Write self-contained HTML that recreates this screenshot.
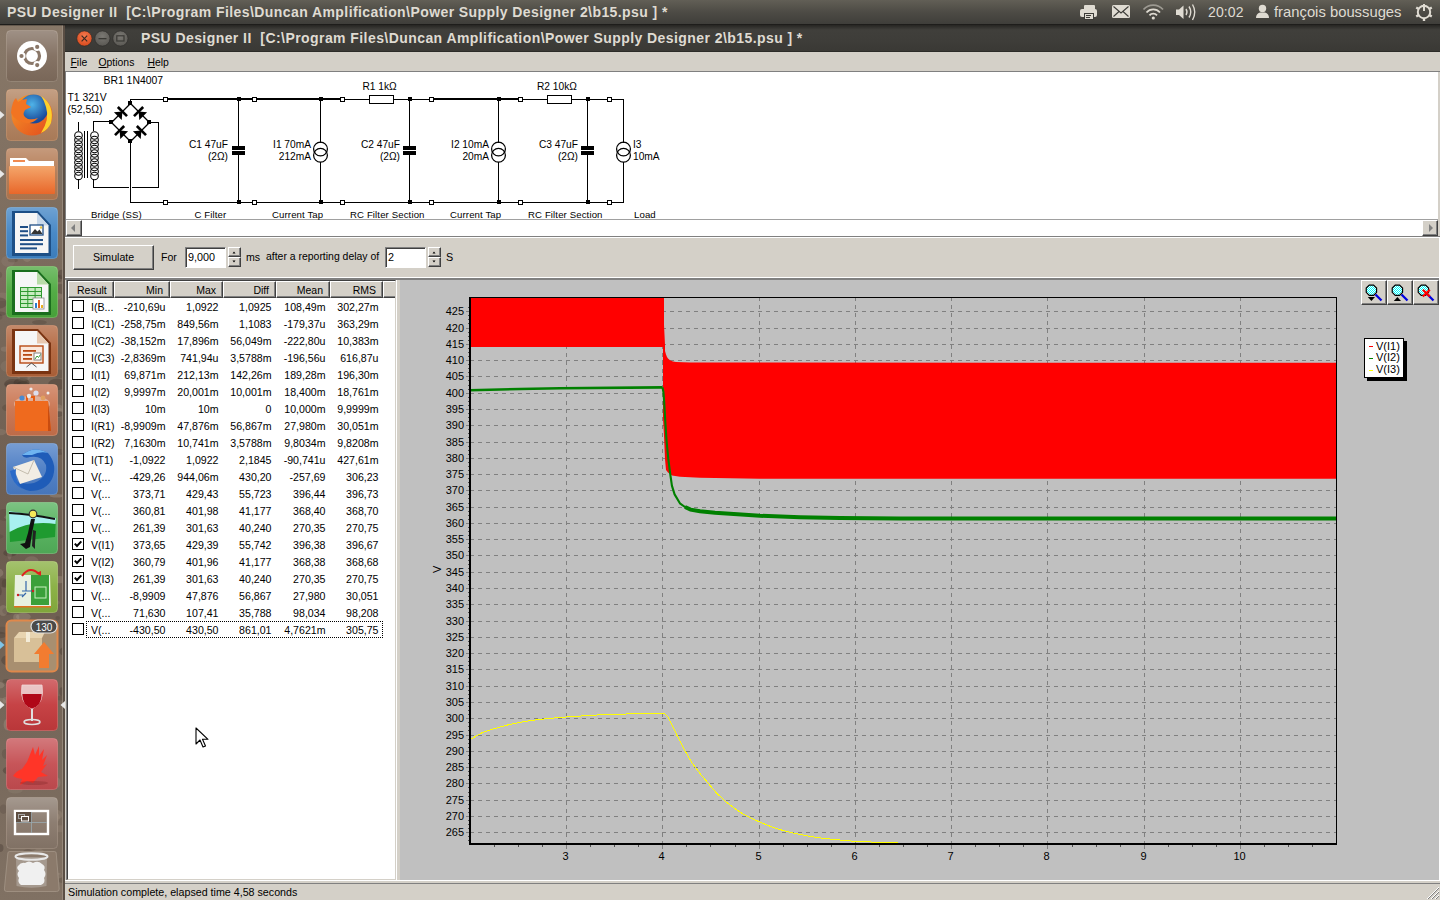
<!DOCTYPE html>
<html><head><meta charset="utf-8"><title>PSU Designer II</title>
<style>
*{margin:0;padding:0;box-sizing:border-box}
html,body{width:1440px;height:900px;overflow:hidden;background:#3c3b37;font-family:"Liberation Sans",sans-serif}
.a{position:absolute}
.t{position:absolute;white-space:nowrap;line-height:1}
svg{position:absolute;overflow:visible}
</style></head><body>

<div class="a" style="left:0;top:0;width:1440px;height:24px;background:linear-gradient(#625f56,#4d4b45 50%,#3f3e3a)"></div><div class="a" style="left:0;top:24px;width:1440px;height:1px;background:#1e1d1b"></div>
<div class="t" style="left:7px;top:5px;font-size:14px;font-weight:bold;color:#dfdbd2;letter-spacing:0.42px">PSU Designer II&nbsp; [C:\Program Files\Duncan Amplification\Power Supply Designer 2\b15.psu ] *</div>
<svg style="left:0;top:0" width="1440" height="24" viewBox="0 0 1440 24">
<g fill="#dfdbd2" stroke="none">
<!-- printer -->
<rect x="1084" y="5" width="11" height="5" rx="1"/>
<rect x="1080" y="9" width="17" height="8" rx="2"/>
<rect x="1084" y="13" width="10" height="7" fill="#3c3b37"/>
<rect x="1085" y="14" width="8" height="5"/>
<rect x="1086" y="15" width="5" height="1" fill="#3c3b37"/><rect x="1086" y="17" width="4" height="1" fill="#3c3b37"/>
<!-- mail -->
<rect x="1112" y="5" width="18" height="13" rx="1.5"/>
<path d="M1113.5 6.5 L1121 13 L1128.5 6.5 M1113.5 16.5 L1119 11.5 M1128.5 16.5 L1123 11.5" stroke="#3c3b37" stroke-width="1.1" fill="none"/>
<!-- wifi -->
<path d="M1143.5 9.5 A13 13 0 0 1 1163 9.5" stroke="#9d9a92" stroke-width="1.8" fill="none"/>
<path d="M1146.5 12.5 A9 9 0 0 1 1160 12.5" stroke="#dfdbd2" stroke-width="1.8" fill="none"/>
<path d="M1149.5 15.3 A5 5 0 0 1 1157 15.3" stroke="#dfdbd2" stroke-width="1.8" fill="none"/>
<circle cx="1153.3" cy="18" r="1.6"/>
<!-- volume -->
<path d="M1176 9.5 h3 l4.5 -4 v13.5 l-4.5 -4 h-3 z"/>
<path d="M1186 9 Q1188 12 1186 15" stroke="#dfdbd2" stroke-width="1.4" fill="none"/>
<path d="M1189 6.5 Q1192.5 12 1189 17.5" stroke="#dfdbd2" stroke-width="1.4" fill="none"/>
<path d="M1192.5 4.5 Q1197 12 1192.5 20" stroke="#dfdbd2" stroke-width="1.4" fill="none"/>
<!-- user -->
<circle cx="1262.5" cy="8.5" r="3.7"/>
<path d="M1256 18 Q1256 13.5 1260 12.5 L1265 12.5 Q1269 13.5 1269 18 Z"/>
<!-- gear/power -->
<g transform="translate(1424,12)">
<circle r="6.2" fill="none" stroke="#dfdbd2" stroke-width="2"/>
<rect x="-1" y="-8" width="2" height="7"/>
<rect x="-1.2" y="-9" width="2.4" height="3" transform="rotate(60)"/><rect x="-1.2" y="-9" width="2.4" height="3" transform="rotate(120)"/>
<rect x="-1.2" y="-9" width="2.4" height="3" transform="rotate(180)"/><rect x="-1.2" y="-9" width="2.4" height="3" transform="rotate(240)"/><rect x="-1.2" y="-9" width="2.4" height="3" transform="rotate(300)"/>
</g>
</g></svg>
<div class="t" style="left:1208px;top:5px;font-size:14px;color:#dfdbd2;letter-spacing:0.1px">20:02</div>
<div class="t" style="left:1274px;top:5px;font-size:14.8px;color:#dfdbd2">françois boussuges</div>
<svg style="left:0;top:24px" width="65" height="876" viewBox="0 24 65 876"><defs>
<linearGradient id="gl" x1="0" y1="0" x2="0" y2="1"><stop offset="0" stop-color="#fff" stop-opacity="0.25"/><stop offset="0.5" stop-color="#fff" stop-opacity="0.05"/><stop offset="1" stop-color="#000" stop-opacity="0.05"/></linearGradient>
<radialGradient id="ffg" cx="0.45" cy="0.35" r="0.6"><stop offset="0" stop-color="#4fb3e8"/><stop offset="1" stop-color="#1a4a9a"/></radialGradient>
<linearGradient id="fox" x1="0" y1="0" x2="1" y2="1"><stop offset="0" stop-color="#f79b2a"/><stop offset="1" stop-color="#e24a1c"/></linearGradient>
<linearGradient id="fold" x1="0" y1="0" x2="0" y2="1"><stop offset="0" stop-color="#f4a66b"/><stop offset="1" stop-color="#e8672a"/></linearGradient>
</defs><defs><linearGradient id="lbg" x1="0" y1="0" x2="0" y2="1"><stop offset="0" stop-color="#887868"/><stop offset="0.3" stop-color="#7a6a5c"/><stop offset="0.6" stop-color="#6c5c4f"/><stop offset="0.8" stop-color="#76675a"/><stop offset="1" stop-color="#807163"/></linearGradient></defs><rect x="0" y="24" width="65" height="876" fill="url(#lbg)"/><ellipse cx="33.2" cy="535.0" rx="8.5" ry="3.6" fill="#3e3229" opacity="0.30"/><ellipse cx="29.8" cy="366.3" rx="6.4" ry="5.1" fill="#3e3229" opacity="0.23"/><ellipse cx="50.7" cy="307.1" rx="6.9" ry="1.7" fill="#a89888" opacity="0.39"/><ellipse cx="37.1" cy="662.0" rx="3.1" ry="1.6" fill="#3e3229" opacity="0.16"/><ellipse cx="10.9" cy="369.8" rx="2.2" ry="3.6" fill="#3e3229" opacity="0.36"/><ellipse cx="38.8" cy="577.0" rx="5.5" ry="4.5" fill="#3e3229" opacity="0.22"/><ellipse cx="63.7" cy="878.5" rx="7.9" ry="4.7" fill="#3e3229" opacity="0.21"/><ellipse cx="-1.1" cy="432.1" rx="7.4" ry="3.3" fill="#a89888" opacity="0.25"/><ellipse cx="53.3" cy="853.6" rx="2.0" ry="2.4" fill="#a89888" opacity="0.27"/><ellipse cx="21.8" cy="867.6" rx="2.5" ry="4.3" fill="#a89888" opacity="0.22"/><ellipse cx="17.3" cy="304.9" rx="8.7" ry="4.9" fill="#3e3229" opacity="0.21"/><ellipse cx="-1.8" cy="313.7" rx="7.6" ry="2.3" fill="#3e3229" opacity="0.26"/><ellipse cx="45.2" cy="370.1" rx="2.9" ry="4.4" fill="#3e3229" opacity="0.26"/><ellipse cx="12.9" cy="384.1" rx="8.8" ry="5.1" fill="#3e3229" opacity="0.37"/><ellipse cx="21.6" cy="382.7" rx="8.0" ry="4.4" fill="#3e3229" opacity="0.40"/><ellipse cx="12.1" cy="384.3" rx="7.4" ry="3.0" fill="#3e3229" opacity="0.17"/><ellipse cx="34.8" cy="306.8" rx="3.7" ry="4.2" fill="#3e3229" opacity="0.26"/><ellipse cx="27.9" cy="854.3" rx="6.0" ry="5.4" fill="#3e3229" opacity="0.19"/><ellipse cx="51.2" cy="822.3" rx="3.7" ry="2.4" fill="#a89888" opacity="0.39"/><ellipse cx="60.5" cy="373.9" rx="8.2" ry="4.2" fill="#3e3229" opacity="0.18"/><ellipse cx="61.4" cy="274.4" rx="3.7" ry="4.7" fill="#3e3229" opacity="0.36"/><ellipse cx="14.5" cy="625.8" rx="3.2" ry="4.7" fill="#3e3229" opacity="0.21"/><ellipse cx="53.7" cy="602.4" rx="6.3" ry="2.8" fill="#a89888" opacity="0.20"/><ellipse cx="12.8" cy="260.4" rx="5.1" ry="1.8" fill="#3e3229" opacity="0.24"/><ellipse cx="3.2" cy="610.5" rx="4.5" ry="5.5" fill="#a89888" opacity="0.31"/><ellipse cx="34.9" cy="685.5" rx="3.0" ry="1.7" fill="#3e3229" opacity="0.38"/><ellipse cx="61.4" cy="691.6" rx="2.1" ry="4.4" fill="#3e3229" opacity="0.33"/><ellipse cx="64.0" cy="450.9" rx="2.5" ry="4.0" fill="#a89888" opacity="0.38"/><ellipse cx="43.3" cy="714.4" rx="7.6" ry="5.6" fill="#3e3229" opacity="0.32"/><ellipse cx="55.0" cy="817.5" rx="4.9" ry="5.1" fill="#a89888" opacity="0.29"/><ellipse cx="20.8" cy="643.7" rx="6.1" ry="4.2" fill="#3e3229" opacity="0.31"/><ellipse cx="55.6" cy="875.8" rx="7.1" ry="3.2" fill="#a89888" opacity="0.30"/><ellipse cx="52.7" cy="527.5" rx="2.6" ry="4.9" fill="#3e3229" opacity="0.30"/><ellipse cx="10.1" cy="553.0" rx="6.9" ry="3.7" fill="#3e3229" opacity="0.38"/><ellipse cx="-5.2" cy="411.2" rx="4.1" ry="4.6" fill="#3e3229" opacity="0.19"/><ellipse cx="40.2" cy="820.6" rx="5.1" ry="5.5" fill="#3e3229" opacity="0.32"/><ellipse cx="24.2" cy="375.1" rx="7.6" ry="5.6" fill="#a89888" opacity="0.25"/><ellipse cx="16.2" cy="617.4" rx="3.0" ry="3.7" fill="#a89888" opacity="0.36"/><ellipse cx="60.5" cy="698.1" rx="3.9" ry="2.3" fill="#3e3229" opacity="0.22"/><ellipse cx="23.0" cy="384.9" rx="6.4" ry="3.7" fill="#3e3229" opacity="0.36"/><ellipse cx="25.7" cy="868.7" rx="2.5" ry="1.6" fill="#a89888" opacity="0.16"/><ellipse cx="33.9" cy="696.4" rx="4.2" ry="5.1" fill="#3e3229" opacity="0.18"/><ellipse cx="-4.3" cy="536.5" rx="7.8" ry="2.6" fill="#3e3229" opacity="0.16"/><ellipse cx="25.3" cy="646.4" rx="6.4" ry="4.4" fill="#a89888" opacity="0.39"/><ellipse cx="8.0" cy="681.2" rx="5.3" ry="2.3" fill="#3e3229" opacity="0.27"/><ellipse cx="6.5" cy="699.9" rx="3.9" ry="3.1" fill="#a89888" opacity="0.28"/><ellipse cx="46.9" cy="637.1" rx="4.8" ry="5.1" fill="#a89888" opacity="0.17"/><ellipse cx="44.6" cy="837.5" rx="2.9" ry="3.5" fill="#3e3229" opacity="0.38"/><ellipse cx="33.8" cy="487.4" rx="8.2" ry="5.1" fill="#a89888" opacity="0.27"/><ellipse cx="8.3" cy="660.3" rx="7.1" ry="5.2" fill="#3e3229" opacity="0.33"/><ellipse cx="57.0" cy="384.4" rx="8.9" ry="5.9" fill="#3e3229" opacity="0.35"/><ellipse cx="57.7" cy="451.8" rx="8.0" ry="3.1" fill="#3e3229" opacity="0.26"/><ellipse cx="47.8" cy="596.7" rx="5.4" ry="1.6" fill="#a89888" opacity="0.17"/><ellipse cx="6.1" cy="753.9" rx="4.3" ry="5.0" fill="#3e3229" opacity="0.19"/><ellipse cx="44.6" cy="575.4" rx="7.9" ry="4.6" fill="#a89888" opacity="0.27"/><ellipse cx="0.0" cy="848.0" rx="3.5" ry="3.9" fill="#3e3229" opacity="0.33"/><ellipse cx="30.6" cy="652.5" rx="7.9" ry="4.0" fill="#3e3229" opacity="0.25"/><ellipse cx="57.0" cy="782.5" rx="3.5" ry="5.3" fill="#a89888" opacity="0.28"/><ellipse cx="8.1" cy="611.0" rx="5.8" ry="3.8" fill="#3e3229" opacity="0.16"/><ellipse cx="30.1" cy="860.7" rx="4.8" ry="5.1" fill="#3e3229" opacity="0.27"/><ellipse cx="-1.4" cy="685.3" rx="5.8" ry="3.4" fill="#a89888" opacity="0.38"/><ellipse cx="27.1" cy="419.6" rx="2.9" ry="3.5" fill="#a89888" opacity="0.38"/><ellipse cx="16.2" cy="550.2" rx="3.3" ry="4.3" fill="#a89888" opacity="0.18"/><ellipse cx="-4.4" cy="741.0" rx="3.4" ry="2.5" fill="#a89888" opacity="0.23"/><ellipse cx="37.4" cy="473.9" rx="2.7" ry="4.8" fill="#3e3229" opacity="0.28"/><ellipse cx="7.8" cy="407.8" rx="5.7" ry="3.5" fill="#3e3229" opacity="0.25"/><ellipse cx="5.2" cy="583.5" rx="3.4" ry="4.3" fill="#3e3229" opacity="0.28"/><ellipse cx="36.8" cy="786.3" rx="8.0" ry="2.5" fill="#a89888" opacity="0.35"/><ellipse cx="16.1" cy="818.7" rx="4.2" ry="5.7" fill="#3e3229" opacity="0.40"/><ellipse cx="3.4" cy="809.2" rx="3.7" ry="4.8" fill="#3e3229" opacity="0.17"/><ellipse cx="23.5" cy="774.3" rx="7.5" ry="2.1" fill="#3e3229" opacity="0.32"/><ellipse cx="8.1" cy="261.2" rx="6.8" ry="5.6" fill="#a89888" opacity="0.18"/><ellipse cx="47.1" cy="568.6" rx="5.5" ry="4.6" fill="#3e3229" opacity="0.17"/><ellipse cx="-3.4" cy="316.9" rx="5.9" ry="3.8" fill="#3e3229" opacity="0.19"/><ellipse cx="8.3" cy="366.3" rx="7.9" ry="6.0" fill="#a89888" opacity="0.17"/><ellipse cx="60.6" cy="289.0" rx="5.2" ry="4.9" fill="#3e3229" opacity="0.27"/><ellipse cx="24.1" cy="574.6" rx="6.2" ry="1.6" fill="#a89888" opacity="0.36"/><ellipse cx="25.8" cy="364.2" rx="7.2" ry="3.3" fill="#3e3229" opacity="0.19"/><ellipse cx="-4.9" cy="572.9" rx="8.3" ry="5.1" fill="#a89888" opacity="0.37"/><ellipse cx="22.3" cy="646.5" rx="6.2" ry="3.8" fill="#a89888" opacity="0.35"/><ellipse cx="57.8" cy="412.7" rx="7.2" ry="5.0" fill="#a89888" opacity="0.25"/><ellipse cx="55.6" cy="814.8" rx="6.9" ry="5.0" fill="#a89888" opacity="0.25"/><ellipse cx="-1.1" cy="705.3" rx="4.4" ry="3.6" fill="#3e3229" opacity="0.24"/><ellipse cx="37.7" cy="652.4" rx="3.6" ry="5.8" fill="#a89888" opacity="0.23"/><ellipse cx="33.9" cy="665.6" rx="5.7" ry="3.3" fill="#a89888" opacity="0.31"/><ellipse cx="47.3" cy="691.8" rx="8.9" ry="1.6" fill="#3e3229" opacity="0.33"/><ellipse cx="22.1" cy="411.7" rx="2.4" ry="2.4" fill="#3e3229" opacity="0.17"/><ellipse cx="57.4" cy="408.1" rx="5.9" ry="3.8" fill="#a89888" opacity="0.29"/><ellipse cx="38.7" cy="876.9" rx="7.7" ry="1.8" fill="#3e3229" opacity="0.34"/><ellipse cx="59.1" cy="278.4" rx="3.1" ry="3.6" fill="#3e3229" opacity="0.27"/><ellipse cx="-1.9" cy="635.0" rx="8.6" ry="3.4" fill="#3e3229" opacity="0.30"/><ellipse cx="14.0" cy="480.3" rx="6.6" ry="4.0" fill="#3e3229" opacity="0.33"/><ellipse cx="-5.0" cy="436.5" rx="3.7" ry="1.7" fill="#3e3229" opacity="0.34"/><ellipse cx="56.8" cy="495.7" rx="7.2" ry="1.7" fill="#a89888" opacity="0.39"/><ellipse cx="57.4" cy="296.3" rx="5.0" ry="3.6" fill="#a89888" opacity="0.21"/><ellipse cx="59.6" cy="579.7" rx="7.1" ry="3.6" fill="#a89888" opacity="0.35"/><ellipse cx="2.1" cy="630.3" rx="6.4" ry="3.6" fill="#3e3229" opacity="0.16"/><ellipse cx="2.7" cy="582.7" rx="5.1" ry="4.5" fill="#3e3229" opacity="0.22"/><ellipse cx="23.4" cy="616.8" rx="7.4" ry="3.9" fill="#a89888" opacity="0.39"/><ellipse cx="10.7" cy="712.6" rx="2.8" ry="5.5" fill="#a89888" opacity="0.31"/><ellipse cx="13.0" cy="476.3" rx="6.8" ry="4.0" fill="#3e3229" opacity="0.31"/><ellipse cx="7.3" cy="724.6" rx="3.7" ry="5.9" fill="#a89888" opacity="0.37"/><ellipse cx="-1.7" cy="274.9" rx="3.9" ry="3.4" fill="#3e3229" opacity="0.18"/><ellipse cx="-0.9" cy="591.2" rx="2.6" ry="4.5" fill="#3e3229" opacity="0.31"/><ellipse cx="27.5" cy="485.1" rx="3.5" ry="3.0" fill="#a89888" opacity="0.36"/><ellipse cx="2.4" cy="296.8" rx="7.7" ry="4.3" fill="#a89888" opacity="0.20"/><ellipse cx="12.1" cy="517.3" rx="7.7" ry="3.2" fill="#a89888" opacity="0.40"/><ellipse cx="32.4" cy="455.0" rx="7.2" ry="5.6" fill="#3e3229" opacity="0.24"/><ellipse cx="55.3" cy="311.1" rx="2.5" ry="1.9" fill="#3e3229" opacity="0.27"/><ellipse cx="14.9" cy="681.8" rx="7.4" ry="1.8" fill="#3e3229" opacity="0.32"/><ellipse cx="15.3" cy="301.5" rx="7.1" ry="4.6" fill="#3e3229" opacity="0.19"/><ellipse cx="44.8" cy="475.4" rx="4.6" ry="2.0" fill="#a89888" opacity="0.29"/><ellipse cx="59.8" cy="828.7" rx="8.4" ry="3.5" fill="#a89888" opacity="0.23"/><ellipse cx="22.0" cy="450.1" rx="8.5" ry="5.5" fill="#3e3229" opacity="0.24"/><ellipse cx="19.4" cy="480.3" rx="4.8" ry="3.2" fill="#3e3229" opacity="0.29"/><ellipse cx="31.8" cy="752.2" rx="7.9" ry="4.0" fill="#3e3229" opacity="0.34"/><ellipse cx="13.7" cy="805.0" rx="2.2" ry="3.8" fill="#3e3229" opacity="0.29"/><ellipse cx="39.6" cy="858.8" rx="7.6" ry="1.8" fill="#3e3229" opacity="0.35"/><ellipse cx="-0.3" cy="302.9" rx="7.2" ry="5.5" fill="#3e3229" opacity="0.31"/><ellipse cx="46.2" cy="340.6" rx="6.5" ry="2.6" fill="#3e3229" opacity="0.34"/><ellipse cx="47.5" cy="578.6" rx="4.8" ry="3.0" fill="#a89888" opacity="0.32"/><ellipse cx="31.6" cy="561.0" rx="7.0" ry="4.7" fill="#a89888" opacity="0.25"/><ellipse cx="40.7" cy="770.5" rx="8.0" ry="5.1" fill="#a89888" opacity="0.37"/><ellipse cx="38.8" cy="853.4" rx="5.7" ry="4.7" fill="#a89888" opacity="0.26"/><ellipse cx="4.2" cy="514.9" rx="7.2" ry="6.0" fill="#3e3229" opacity="0.19"/><ellipse cx="23.7" cy="378.7" rx="4.0" ry="5.9" fill="#3e3229" opacity="0.23"/><ellipse cx="39.4" cy="322.3" rx="7.4" ry="2.3" fill="#3e3229" opacity="0.26"/><ellipse cx="57.7" cy="618.0" rx="2.3" ry="2.0" fill="#3e3229" opacity="0.20"/><ellipse cx="44.2" cy="398.3" rx="6.2" ry="2.5" fill="#3e3229" opacity="0.22"/><ellipse cx="47.0" cy="358.7" rx="4.2" ry="4.0" fill="#a89888" opacity="0.27"/><ellipse cx="56.1" cy="414.1" rx="8.4" ry="3.0" fill="#3e3229" opacity="0.39"/><ellipse cx="9.5" cy="554.0" rx="2.3" ry="5.8" fill="#a89888" opacity="0.25"/><ellipse cx="30.1" cy="582.4" rx="3.9" ry="6.0" fill="#a89888" opacity="0.21"/><ellipse cx="27.1" cy="256.9" rx="4.6" ry="5.1" fill="#a89888" opacity="0.30"/><ellipse cx="5.0" cy="349.1" rx="4.3" ry="2.7" fill="#a89888" opacity="0.28"/><ellipse cx="63.5" cy="651.3" rx="3.9" ry="3.9" fill="#3e3229" opacity="0.34"/><ellipse cx="51.5" cy="250.9" rx="7.9" ry="5.2" fill="#3e3229" opacity="0.22"/><ellipse cx="0.8" cy="701.4" rx="5.4" ry="3.6" fill="#a89888" opacity="0.30"/><ellipse cx="15.3" cy="790.1" rx="7.5" ry="3.4" fill="#a89888" opacity="0.17"/><ellipse cx="8.6" cy="770.6" rx="5.8" ry="3.9" fill="#3e3229" opacity="0.36"/><rect x="62" y="24" width="1" height="876" fill="#9b8d7f" opacity="0.8"/><rect x="63" y="24" width="2" height="876" fill="#5a4e44"/><rect x="6.5" y="30.5" width="51" height="51" rx="4" fill="#7f6c5d" stroke="#a89888" stroke-opacity="0.6"/><rect x="6.5" y="30.5" width="51" height="51" rx="4" fill="url(#gl)"/><circle cx="32" cy="56" r="15" fill="#fff"/><circle cx="32" cy="56" r="7.5" fill="none" stroke="#8a7768" stroke-width="3.2"/><circle cx="36.9" cy="47.5" r="3.4" fill="#fff"/><circle cx="37.2" cy="46.9" r="2.1" fill="#8a7768"/><circle cx="22.2" cy="56.0" r="3.4" fill="#fff"/><circle cx="21.5" cy="56.0" r="2.1" fill="#8a7768"/><circle cx="36.9" cy="64.5" r="3.4" fill="#fff"/><circle cx="37.2" cy="65.1" r="2.1" fill="#8a7768"/><rect x="6.5" y="89.5" width="51" height="51" rx="4" fill="#b0805c" stroke="#d09a70" stroke-opacity="0.6"/><rect x="6.5" y="89.5" width="51" height="51" rx="4" fill="url(#gl)"/><circle cx="32" cy="115" r="20.5" fill="url(#fox)"/><circle cx="33.5" cy="109" r="14.5" fill="url(#ffg)"/><path d="M41 96 Q55 105 51 123 Q48 130 41 133 Q50 119 46 107 Q44 100 41 96 Z" fill="#fcd02c"/><path d="M11 113 Q12 101 16 98 L18 102 Q22 99 27 99 L26 104 L31 107 L25 110 Q21 116 28 119 Q33 120 38 118 Q33 124 26 123 Q15 121 11 113 Z" fill="#f27422"/><rect x="6.5" y="148.5" width="51" height="51" rx="4" fill="#b27850" stroke="#cc9470" stroke-opacity="0.6"/><rect x="6.5" y="148.5" width="51" height="51" rx="4" fill="url(#gl)"/><path d="M10 158 h16 l3 3 h25 v7 h-44 z" fill="#fff"/><rect x="13" y="160" width="12" height="2" fill="#f08a50"/><rect x="9" y="166" width="46" height="28" rx="1" fill="url(#fold)"/><rect x="6.5" y="207.5" width="51" height="51" rx="4" fill="#3f83c4" stroke="#74aee0" stroke-opacity="0.6"/><rect x="6.5" y="207.5" width="51" height="51" rx="4" fill="url(#gl)"/><path d="M12 211 h26 l13 14 v31 h-39 z" fill="#1d4f86"/><path d="M15 213 h22 l11.5 12.5 v27.5 h-33.5 z" fill="#f6f6f6"/><path d="M37 213 l11.5 12.5 h-11.5 z" fill="#c8d8ea"/><rect x="20" y="226.0" width="8" height="2" fill="#1f4e86"/><rect x="20" y="230.2" width="8" height="2" fill="#1f4e86"/><rect x="20" y="234.4" width="8" height="2" fill="#1f4e86"/><rect x="30" y="225" width="13" height="10" fill="#fff" stroke="#1f4e86" stroke-width="1.3"/><path d="M31 234 l4 -5 l2.5 2.5 l2 -2 l3 4.5 z" fill="#333"/><circle cx="41" cy="227.5" r="1.2" fill="#e8c040"/><rect x="20" y="239.0" width="23" height="2" fill="#1f4e86"/><rect x="20" y="243.2" width="23" height="2" fill="#1f4e86"/><rect x="20" y="247.4" width="17" height="2" fill="#1f4e86"/><rect x="6.5" y="266.5" width="51" height="51" rx="4" fill="#4aa83c" stroke="#80cc6c" stroke-opacity="0.6"/><rect x="6.5" y="266.5" width="51" height="51" rx="4" fill="url(#gl)"/><path d="M12 270 h26 l13 14 v31 h-39 z" fill="#1b6e1e"/><path d="M15 272 h22 l11.5 12.5 v27.5 h-33.5 z" fill="#f6f6f6"/><path d="M37 272 l11.5 12.5 h-11.5 z" fill="#b8dca8"/><rect x="20" y="287" width="22" height="21" fill="#2f9a30"/><rect x="21" y="288.0" width="20" height="3" fill="#c8ecc0"/><rect x="21" y="292.0" width="20" height="3" fill="#c8ecc0"/><rect x="21" y="296.0" width="20" height="3" fill="#c8ecc0"/><rect x="21" y="300.0" width="20" height="3" fill="#c8ecc0"/><rect x="21" y="304.0" width="20" height="3" fill="#c8ecc0"/><rect x="27.3" y="287" width="1" height="21" fill="#2f9a30"/><rect x="34.6" y="287" width="1" height="21" fill="#2f9a30"/><rect x="33" y="298" width="11" height="11" fill="#fff" stroke="#888" stroke-width="0.8"/><rect x="35" y="303" width="2" height="5" fill="#2a7ad0"/><rect x="38" y="300" width="2" height="8" fill="#e06020"/><rect x="41" y="305" width="2" height="3" fill="#e8b020"/><rect x="6.5" y="325.5" width="51" height="51" rx="4" fill="#b1633a" stroke="#d08c66" stroke-opacity="0.6"/><rect x="6.5" y="325.5" width="51" height="51" rx="4" fill="url(#gl)"/><path d="M12 329 h26 l13 14 v31 h-39 z" fill="#7a3412"/><path d="M15 331 h22 l11.5 12.5 v27.5 h-33.5 z" fill="#f6f6f6"/><path d="M37 331 l11.5 12.5 h-11.5 z" fill="#e8c8b0"/><rect x="20" y="346" width="23" height="17" fill="#fbe8dc" stroke="#b84a14" stroke-width="1.4"/><rect x="23" y="350" width="13" height="1.8" fill="#b84a14"/><rect x="23" y="354" width="9" height="1.8" fill="#b84a14"/><rect x="23" y="358" width="9" height="1.8" fill="#b84a14"/><rect x="34" y="353" width="7" height="7" fill="#fff" stroke="#666" stroke-width="0.8"/><path d="M35 359 l2 -3 l1.5 1.5 l2 -3" stroke="#3a9a3a" fill="none" stroke-width="1"/><path d="M31.5 363 l-5 4 M31.5 363 l5 4" stroke="#555" stroke-width="1"/><rect x="6.5" y="384.5" width="51" height="51" rx="4" fill="#c8714c" stroke="#e09a78" stroke-opacity="0.6"/><rect x="6.5" y="384.5" width="51" height="51" rx="4" fill="url(#gl)"/><ellipse cx="32" cy="404" rx="18" ry="8" fill="#fff" opacity="0.35"/><path d="M15 401 h33 l3 30 h-36 z" fill="#ef6a1e"/><path d="M48 401 l3 30 h-3 z" fill="#c84c10"/><path d="M27 401 v-4 h7 v4" fill="none" stroke="#e85a10" stroke-width="2"/><circle cx="22" cy="398" r="2.6" fill="#4a8ad0"/><circle cx="29" cy="396" r="2.2" fill="#e8e8e8"/><circle cx="36" cy="393" r="2.6" fill="#dde"/><circle cx="43" cy="398" r="2.4" fill="#e0a060"/><circle cx="48" cy="393" r="1.5" fill="#eee"/><circle cx="31" cy="389" r="1.6" fill="#eee"/><rect x="6.5" y="443.5" width="51" height="51" rx="4" fill="#4a7cc4" stroke="#7aa4dc" stroke-opacity="0.6"/><rect x="6.5" y="443.5" width="51" height="51" rx="4" fill="url(#gl)"/><path d="M22 455 Q34 445 48 453 Q58 465 52 479 Q46 491 30 491 Q20 489 14 481 Q24 485 34 483 Q48 477 46 465 Q42 455 30 457 Q24 459 22 455 Z" fill="#1f5cb8"/><path d="M22 455 Q34 445 48 453 Q40 451 32 455 Z" fill="#6fb4f0"/><path d="M13 467 L34 460 L42 477 L20 484 Z" fill="#f2ede4"/><path d="M13 467 L28 474 L34 460" fill="none" stroke="#b8b0a0" stroke-width="0.8"/><path d="M10 471 Q12 483 22 489 Q14 479 16 469 Z" fill="#2a6ac8"/><rect x="6.5" y="502.5" width="51" height="51" rx="4" fill="#52b05a" stroke="#86d08a" stroke-opacity="0.6"/><rect x="6.5" y="502.5" width="51" height="51" rx="4" fill="url(#gl)"/><path d="M9 511 L56 518 L55 537 L10 542 Z" fill="#1e9a30"/><path d="M9 511 L56 518 L55.5 524 Q30 520 9.5 532 Z" fill="#a8f0f0"/><path d="M9 513 Q30 514 55 519" fill="none" stroke="#111" stroke-width="2"/><circle cx="33" cy="514" r="3.8" fill="#f4e858" stroke="#333" stroke-width="1.2"/><path d="M31 519 h4 l-3 14 l-2 14 l-4 2 l-6 -5 l5 -1 l3 -10 z" fill="#111"/><path d="M33 530 l-1 16 l3 3 l0 -6 l1 -12 z" fill="#222"/><rect x="6.5" y="561.5" width="51" height="51" rx="4" fill="#86ae3e" stroke="#b0d070" stroke-opacity="0.6"/><rect x="6.5" y="561.5" width="51" height="51" rx="4" fill="url(#gl)"/><path d="M15 575 h35 l1 32 h-37 z" fill="#e8f0e0"/><rect x="14" y="606" width="37" height="1.5" fill="#e07020"/><rect x="31" y="575" width="18" height="30" fill="#3aa03a"/><rect x="35" y="587" width="11" height="11" fill="none" stroke="#c8f0c0" stroke-width="1"/><path d="M26 581 v10 M22 591 h10 M22 597 l4 -4 M18 595 h5" stroke="#3366aa" stroke-width="1.2"/><circle cx="33" cy="591" r="1.2" fill="#d02020"/><circle cx="18" cy="595" r="1.2" fill="#d02020"/><path d="M22 576 Q30 565 39 574" fill="none" stroke="#e02020" stroke-width="2"/><path d="M36 573 l5 3 l0 -5 z" fill="#e02020"/><rect x="6.5" y="620.5" width="51" height="51" rx="5" fill="#a88f70" stroke="#e0884a" stroke-width="2"/><path d="M14 638 h28 v24 h-28 z" fill="#d8c098"/><path d="M14 638 l5 -6 h26 l-3 6 z" fill="#e8d4b0"/><rect x="26" y="632" width="4" height="10" fill="#f4ecd8"/><path d="M34 654 l10 -12 l10 12 h-5 v14 h-10 v-14 z" fill="#f27c30"/><rect x="31" y="620" width="26" height="13" rx="6.5" fill="#4a4a4a" stroke="#ddd" stroke-width="1.2"/><text x="44" y="630.5" font-family="Liberation Sans" font-size="10" fill="#fff" text-anchor="middle">130</text><rect x="6.5" y="679.5" width="51" height="51" rx="4" fill="#c3393c" stroke="#e07070" stroke-opacity="0.6"/><rect x="6.5" y="679.5" width="51" height="51" rx="4" fill="url(#gl)"/><path d="M22 685 h20 q3 18 -10 24 q-13 -6 -10 -24 z" fill="#f4e8e8" opacity="0.75" stroke="#fff" stroke-width="0.8"/><path d="M22.3 694 h19.4 q0 12 -9.7 14.5 q-9.7 -2.5 -9.7 -14.5 z" fill="#b00818"/><rect x="31" y="709" width="2" height="12" fill="#e0e0e0"/><ellipse cx="32" cy="722" rx="8" ry="2.5" fill="none" stroke="#e0e0e0" stroke-width="1.5"/><rect x="6.5" y="738.5" width="51" height="51" rx="4" fill="#c44c50" stroke="#e07a7e" stroke-opacity="0.6"/><rect x="6.5" y="738.5" width="51" height="51" rx="4" fill="url(#gl)"/><path d="M13 776 Q16 771 22 769 L27 762 L33 747 L35 755 L39 746 L39 756 L44 749 L42 760 L47 755 L43 766 L47 764 L41 772 L48 776 L38 777 L33 783 L27 781 L20 785 L22 779 L17 778 Z" fill="#ff3528"/><ellipse cx="34" cy="783" rx="14" ry="2" fill="#7a2020" opacity="0.3"/><rect x="6.5" y="797.5" width="51" height="51" rx="4" fill="#87776a" stroke="#a89888" stroke-opacity="0.6"/><rect x="6.5" y="797.5" width="51" height="51" rx="4" fill="url(#gl)"/><rect x="15" y="811" width="33" height="23" fill="none" stroke="#fff" stroke-width="2.4"/><rect x="16" y="812" width="15.5" height="10.5" fill="#5f4f43"/><path d="M31.5 812 v21 M16 822.5 h31" stroke="#9aaab0" stroke-width="0.8"/><rect x="18.5" y="814.5" width="6" height="4" fill="none" stroke="#a8a8a8" stroke-width="1"/><rect x="21.5" y="816.5" width="7" height="4.5" fill="#5f4f43" stroke="#fff" stroke-width="1"/><path d="M9.5 851.5 h45 q1.5 0 1.7 1.5 l3 36 q0 2.5 -2.5 2.5 h-50 q-2.5 0 -2.3 -2.5 l3.5 -36 q0.2 -1.5 1.6 -1.5 z" fill="#8b7a6b" stroke="#a89a8c" stroke-opacity="0.7"/><path d="M16 857 h31 l-0.5 29 q-15 3.5 -30 0 z" fill="#d8d4d0" opacity="0.35"/><path d="M18 866 q3 -4 7 -3 q4 -3 8 0 q5 -3 9 1 q4 2 2 6 q3 4 0 8 q2 5 -3 7 h-20 q-4 -3 -2 -7 q-3 -4 0 -7 q-3 -3 -1 -5 z" fill="#f0f0f0"/><ellipse cx="31.5" cy="856.5" rx="16" ry="3.2" fill="none" stroke="#e8e8e8" stroke-width="2"/><path d="M0 111 L4.5 115 L0 119 z" fill="#e8e8e8"/><path d="M0 170 L4.5 174 L0 178 z" fill="#e8e8e8"/><path d="M0 641 L4.5 645 L0 649 z" fill="#7fc4e8"/><path d="M0 701 L4.5 705 L0 709 z" fill="#e8e8e8"/><path d="M65 701 L60.5 705 L65 709 z" fill="#e8e8e8"/></svg>
<div class="a" style="left:0;top:24px;width:65px;height:1px;background:#1e1d1b"></div><div class="a" style="left:0;top:25px;width:65px;height:1px;background:#000;opacity:0.25"></div>
<div class="a" style="left:65px;top:25px;width:1375px;height:27px;background:linear-gradient(#262522,#403f3b 18%,#3e3d39 60%,#3a3935 96%,#2c2b28 96%)"></div>
<svg style="left:65px;top:24px" width="80" height="28" viewBox="65 24 80 28">
<defs><radialGradient id="cls" cx="0.5" cy="0.35" r="0.65"><stop offset="0" stop-color="#f47a50"/><stop offset="1" stop-color="#d84a1c"/></radialGradient>
<radialGradient id="mn" cx="0.5" cy="0.35" r="0.65"><stop offset="0" stop-color="#7a7873"/><stop offset="1" stop-color="#5a5853"/></radialGradient></defs>
<circle cx="84.4" cy="38.5" r="7.6" fill="url(#cls)" stroke="#2a2926" stroke-width="0.6"/>
<path d="M81.6 35.7 L87.2 41.3 M87.2 35.7 L81.6 41.3" stroke="#3a2a20" stroke-width="1.2"/>
<circle cx="102.4" cy="38.5" r="7.6" fill="url(#mn)" stroke="#2a2926" stroke-width="0.6"/>
<rect x="98.5" y="38" width="8" height="1.3" fill="#3a3935"/>
<circle cx="120.4" cy="38.5" r="7.6" fill="url(#mn)" stroke="#2a2926" stroke-width="0.6"/>
<rect x="116.8" y="35.8" width="7.2" height="5.2" fill="none" stroke="#3a3935" stroke-width="1.2"/>
</svg>
<div class="t" style="left:141px;top:31px;font-size:14px;font-weight:bold;color:#dfdbd2;letter-spacing:0.43px">PSU Designer II&nbsp; [C:\Program Files\Duncan Amplification\Power Supply Designer 2\b15.psu ] *</div>
<div class="a" style="left:65px;top:52px;width:1375px;height:848px;background:#d4d0c8"></div>
<div class="t" style="left:70.5px;top:58px;font-size:10.4px;color:#000"><span style="text-decoration:underline">F</span>ile</div>
<div class="t" style="left:98.5px;top:58px;font-size:10.4px;color:#000"><span style="text-decoration:underline">O</span>ptions</div>
<div class="t" style="left:147.5px;top:58px;font-size:10.4px;color:#000"><span style="text-decoration:underline">H</span>elp</div>
<div class="a" style="left:65px;top:71px;width:1375px;height:1px;background:#808080"></div>
<div class="a" style="left:65px;top:72px;width:1px;height:164px;background:#808080"></div>
<div class="a" style="left:66px;top:72px;width:1372px;height:147px;background:#fff"></div>
<div class="a" style="left:66px;top:219px;width:1372px;height:1px;background:#a0a0a0"></div>
<div class="a" style="left:66px;top:220px;width:1372px;height:16px;background:#fff"></div>
<div class="a" style="left:66px;top:220px;width:16px;height:16px;background:#d4d0c8;border-top:1px solid #fff;border-left:1px solid #fff;border-right:1px solid #404040;border-bottom:1px solid #404040;box-shadow:inset -1px -1px 0 #808080"></div><svg style="left:66px;top:220px" width="16" height="16"><path d="M5 8 L9 4 L9 12 Z" fill="#808080"/></svg>
<div class="a" style="left:1422px;top:220px;width:16px;height:16px;background:#d4d0c8;border-top:1px solid #fff;border-left:1px solid #fff;border-right:1px solid #404040;border-bottom:1px solid #404040;box-shadow:inset -1px -1px 0 #808080"></div><svg style="left:1422px;top:220px" width="16" height="16"><path d="M11 8 L7 4 L7 12 Z" fill="#808080"/></svg>
<div class="a" style="left:1438px;top:72px;width:2px;height:164px;background:#d4d0c8"></div>
<div class="a" style="left:65px;top:236px;width:1375px;height:1px;background:#808080"></div>
<div class="a" style="left:65px;top:237px;width:1375px;height:1px;background:#fff"></div>
<div class="a" style="left:73px;top:245px;width:81px;height:25px;background:#d4d0c8;border-top:1px solid #fff;border-left:1px solid #fff;border-right:1px solid #404040;border-bottom:1px solid #404040;box-shadow:inset -1px -1px 0 #808080"></div>
<div class="t" style="left:73px;top:252px;width:81px;text-align:center;font-size:10.6px;color:#000">Simulate</div>
<div class="t" style="left:161px;top:252px;font-size:10.6px;color:#000">For</div>
<div class="a" style="left:185px;top:247px;width:41px;height:21px;background:#fff;border-top:1px solid #808080;border-left:1px solid #808080;border-right:1px solid #fff;border-bottom:1px solid #fff;box-shadow:inset 1px 1px 0 #404040"></div>
<div class="t" style="left:188px;top:252px;font-size:10.8px;color:#000">9,000</div>
<div class="a" style="left:228px;top:247px;width:13px;height:10px;background:#d4d0c8;border-top:1px solid #fff;border-left:1px solid #fff;border-right:1px solid #404040;border-bottom:1px solid #404040;box-shadow:inset -1px -1px 0 #808080"></div><div class="a" style="left:228px;top:257px;width:13px;height:10px;background:#d4d0c8;border-top:1px solid #fff;border-left:1px solid #fff;border-right:1px solid #404040;border-bottom:1px solid #404040;box-shadow:inset -1px -1px 0 #808080"></div><svg style="left:228px;top:247px" width="13" height="20"><path d="M4.5 6.5 h3 l-1.5 -2 z" fill="#000"/><path d="M4.5 13.5 h3 l-1.5 2 z" fill="#000"/></svg>
<div class="t" style="left:246px;top:252px;font-size:10.6px;color:#000">ms</div>
<div class="t" style="left:266px;top:252px;font-size:10.45px;color:#000">after a reporting delay of</div>
<div class="a" style="left:385px;top:247px;width:41px;height:21px;background:#fff;border-top:1px solid #808080;border-left:1px solid #808080;border-right:1px solid #fff;border-bottom:1px solid #fff;box-shadow:inset 1px 1px 0 #404040"></div>
<div class="t" style="left:388px;top:252px;font-size:10.8px;color:#000">2</div>
<div class="a" style="left:428px;top:247px;width:13px;height:10px;background:#d4d0c8;border-top:1px solid #fff;border-left:1px solid #fff;border-right:1px solid #404040;border-bottom:1px solid #404040;box-shadow:inset -1px -1px 0 #808080"></div><div class="a" style="left:428px;top:257px;width:13px;height:10px;background:#d4d0c8;border-top:1px solid #fff;border-left:1px solid #fff;border-right:1px solid #404040;border-bottom:1px solid #404040;box-shadow:inset -1px -1px 0 #808080"></div><svg style="left:428px;top:247px" width="13" height="20"><path d="M4.5 6.5 h3 l-1.5 -2 z" fill="#000"/><path d="M4.5 13.5 h3 l-1.5 2 z" fill="#000"/></svg>
<div class="t" style="left:446px;top:252px;font-size:10.8px;color:#000">S</div>
<div class="a" style="left:65px;top:277px;width:1375px;height:1px;background:#fff"></div>
<div class="a" style="left:65px;top:278px;width:1375px;height:1px;background:#808080"></div>
<div class="a" style="left:65px;top:883px;width:1375px;height:1px;background:#808080"></div>
<div class="a" style="left:65px;top:884px;width:1375px;height:16px;background:#d4d0c8"></div>
<div class="t" style="left:68px;top:887px;font-size:10.7px;color:#000">Simulation complete, elapsed time 4,58 seconds</div>
<svg style="left:1424px;top:884px" width="16" height="16"><path d="M15 3 L3 15 M15 7 L7 15 M15 11 L11 15" stroke="#fff" stroke-width="1"/><path d="M15 4 L4 15 M15 8 L8 15 M15 12 L12 15" stroke="#808080" stroke-width="1"/></svg>
<svg style="left:66px;top:72px" width="1372" height="147" viewBox="66 72 1372 147" shape-rendering="crispEdges"><rect x="130" y="99" width="35" height="1" fill="#000"/><rect x="166" y="98" width="177" height="2" fill="#000"/><rect x="343" y="99" width="89" height="1" fill="#000"/><rect x="432" y="98" width="89" height="2" fill="#000"/><rect x="521" y="99" width="103" height="1" fill="#000"/><rect x="130" y="202" width="494" height="1" fill="#000"/><rect x="623" y="99" width="1" height="44" fill="#000"/><rect x="623" y="162" width="1" height="41" fill="#000"/><rect x="163.5" y="97.5" width="4" height="4" fill="#fff" stroke="#000" stroke-width="1" shape-rendering="auto"/><rect x="163.5" y="200.5" width="4" height="4" fill="#fff" stroke="#000" stroke-width="1" shape-rendering="auto"/><rect x="252.5" y="97.5" width="4" height="4" fill="#fff" stroke="#000" stroke-width="1" shape-rendering="auto"/><rect x="252.5" y="200.5" width="4" height="4" fill="#fff" stroke="#000" stroke-width="1" shape-rendering="auto"/><rect x="340.5" y="97.5" width="4" height="4" fill="#fff" stroke="#000" stroke-width="1" shape-rendering="auto"/><rect x="340.5" y="200.5" width="4" height="4" fill="#fff" stroke="#000" stroke-width="1" shape-rendering="auto"/><rect x="429.5" y="97.5" width="4" height="4" fill="#fff" stroke="#000" stroke-width="1" shape-rendering="auto"/><rect x="429.5" y="200.5" width="4" height="4" fill="#fff" stroke="#000" stroke-width="1" shape-rendering="auto"/><rect x="518.5" y="97.5" width="4" height="4" fill="#fff" stroke="#000" stroke-width="1" shape-rendering="auto"/><rect x="518.5" y="200.5" width="4" height="4" fill="#fff" stroke="#000" stroke-width="1" shape-rendering="auto"/><rect x="607.5" y="97.5" width="4" height="4" fill="#fff" stroke="#000" stroke-width="1" shape-rendering="auto"/><rect x="607.5" y="200.5" width="4" height="4" fill="#fff" stroke="#000" stroke-width="1" shape-rendering="auto"/><rect x="238" y="99" width="1" height="104" fill="#000"/><rect x="237" y="97" width="4" height="4" fill="#000"/><rect x="237" y="200" width="4" height="4" fill="#000"/><rect x="409" y="99" width="1" height="104" fill="#000"/><rect x="408" y="97" width="4" height="4" fill="#000"/><rect x="408" y="200" width="4" height="4" fill="#000"/><rect x="587" y="99" width="1" height="104" fill="#000"/><rect x="586" y="97" width="4" height="4" fill="#000"/><rect x="586" y="200" width="4" height="4" fill="#000"/><rect x="320" y="99" width="1" height="44" fill="#000"/><rect x="320" y="162" width="1" height="41" fill="#000"/><rect x="319" y="97" width="4" height="4" fill="#000"/><rect x="319" y="200" width="4" height="4" fill="#000"/><rect x="498" y="99" width="1" height="44" fill="#000"/><rect x="498" y="162" width="1" height="41" fill="#000"/><rect x="497" y="97" width="4" height="4" fill="#000"/><rect x="497" y="200" width="4" height="4" fill="#000"/><rect x="369.5" y="95.5" width="24" height="8" fill="#fff" stroke="#000" stroke-width="1"/><rect x="547.5" y="95.5" width="24" height="8" fill="#fff" stroke="#000" stroke-width="1"/><rect x="232" y="146" width="13" height="4" fill="#000"/><rect x="232" y="151" width="13" height="4" fill="#000"/><rect x="238" y="150" width="1" height="1" fill="#fff"/><rect x="403" y="146" width="13" height="4" fill="#000"/><rect x="403" y="151" width="13" height="4" fill="#000"/><rect x="409" y="150" width="1" height="1" fill="#fff"/><rect x="581" y="146" width="13" height="4" fill="#000"/><rect x="581" y="151" width="13" height="4" fill="#000"/><rect x="587" y="150" width="1" height="1" fill="#fff"/><circle cx="320.5" cy="149" r="6.9" fill="none" stroke="#000" stroke-width="1.25" shape-rendering="auto"/><circle cx="320.5" cy="155.2" r="6.9" fill="none" stroke="#000" stroke-width="1.25" shape-rendering="auto"/><circle cx="498.5" cy="149" r="6.9" fill="none" stroke="#000" stroke-width="1.25" shape-rendering="auto"/><circle cx="498.5" cy="155.2" r="6.9" fill="none" stroke="#000" stroke-width="1.25" shape-rendering="auto"/><circle cx="623.5" cy="149" r="6.9" fill="none" stroke="#000" stroke-width="1.25" shape-rendering="auto"/><circle cx="623.5" cy="155.2" r="6.9" fill="none" stroke="#000" stroke-width="1.25" shape-rendering="auto"/><rect x="130" y="99" width="1" height="5" fill="#000"/><rect x="128" y="101" width="4" height="4" fill="#000"/><rect x="109" y="120" width="4" height="4" fill="#000"/><rect x="147" y="120" width="4" height="4" fill="#000"/><rect x="128" y="139" width="4" height="4" fill="#000"/><line x1="111.5" y1="122.5" x2="130.5" y2="103.5" stroke="#000" stroke-width="1.2" shape-rendering="auto"/><path d="M122.41 111.59 L121.71 120.07 L113.93 112.29 Z" fill="#000" shape-rendering="auto"/><line x1="127.01" y1="116.18" x2="117.82" y2="106.99" stroke="#000" stroke-width="2.6" shape-rendering="auto"/><line x1="149.5" y1="122.5" x2="130.5" y2="103.5" stroke="#000" stroke-width="1.2" shape-rendering="auto"/><path d="M138.59 111.59 L147.07 112.29 L139.29 120.07 Z" fill="#000" shape-rendering="auto"/><line x1="143.18" y1="106.99" x2="133.99" y2="116.18" stroke="#000" stroke-width="2.6" shape-rendering="auto"/><line x1="130.5" y1="141.5" x2="111.5" y2="122.5" stroke="#000" stroke-width="1.2" shape-rendering="auto"/><path d="M119.59 130.59 L128.07 131.29 L120.29 139.07 Z" fill="#000" shape-rendering="auto"/><line x1="124.18" y1="125.99" x2="114.99" y2="135.18" stroke="#000" stroke-width="2.6" shape-rendering="auto"/><line x1="130.5" y1="141.5" x2="149.5" y2="122.5" stroke="#000" stroke-width="1.2" shape-rendering="auto"/><path d="M141.41 130.59 L140.71 139.07 L132.93 131.29 Z" fill="#000" shape-rendering="auto"/><line x1="146.01" y1="135.18" x2="136.82" y2="125.99" stroke="#000" stroke-width="2.6" shape-rendering="auto"/><rect x="93" y="121" width="17" height="1" fill="#000"/><rect x="151" y="122" width="8" height="1" fill="#000"/><rect x="158" y="122" width="1" height="66" fill="#000"/><rect x="130" y="143" width="1" height="60" fill="#000"/><rect x="93" y="187" width="36" height="1" fill="#000"/><rect x="132" y="187" width="27" height="1" fill="#000"/><rect x="78" y="122" width="1" height="9" fill="#000"/><rect x="78" y="179" width="1" height="10" fill="#000"/><rect x="93" y="121" width="1" height="10" fill="#000"/><rect x="93" y="179" width="1" height="9" fill="#000"/><rect x="84" y="131" width="1" height="47" fill="#000"/><rect x="87" y="131" width="1" height="47" fill="#000"/><ellipse cx="78.5" cy="135.5" rx="3.8" ry="3.7" fill="none" stroke="#000" stroke-width="1.05" shape-rendering="auto"/><ellipse cx="78.5" cy="140.0" rx="3.8" ry="3.7" fill="none" stroke="#000" stroke-width="1.05" shape-rendering="auto"/><ellipse cx="78.5" cy="144.5" rx="3.8" ry="3.7" fill="none" stroke="#000" stroke-width="1.05" shape-rendering="auto"/><ellipse cx="78.5" cy="149.0" rx="3.8" ry="3.7" fill="none" stroke="#000" stroke-width="1.05" shape-rendering="auto"/><ellipse cx="78.5" cy="153.5" rx="3.8" ry="3.7" fill="none" stroke="#000" stroke-width="1.05" shape-rendering="auto"/><ellipse cx="78.5" cy="158.0" rx="3.8" ry="3.7" fill="none" stroke="#000" stroke-width="1.05" shape-rendering="auto"/><ellipse cx="78.5" cy="162.5" rx="3.8" ry="3.7" fill="none" stroke="#000" stroke-width="1.05" shape-rendering="auto"/><ellipse cx="78.5" cy="167.0" rx="3.8" ry="3.7" fill="none" stroke="#000" stroke-width="1.05" shape-rendering="auto"/><ellipse cx="78.5" cy="171.5" rx="3.8" ry="3.7" fill="none" stroke="#000" stroke-width="1.05" shape-rendering="auto"/><ellipse cx="78.5" cy="176.0" rx="3.8" ry="3.7" fill="none" stroke="#000" stroke-width="1.05" shape-rendering="auto"/><ellipse cx="94.5" cy="135.5" rx="3.8" ry="3.7" fill="none" stroke="#000" stroke-width="1.05" shape-rendering="auto"/><ellipse cx="94.5" cy="140.0" rx="3.8" ry="3.7" fill="none" stroke="#000" stroke-width="1.05" shape-rendering="auto"/><ellipse cx="94.5" cy="144.5" rx="3.8" ry="3.7" fill="none" stroke="#000" stroke-width="1.05" shape-rendering="auto"/><ellipse cx="94.5" cy="149.0" rx="3.8" ry="3.7" fill="none" stroke="#000" stroke-width="1.05" shape-rendering="auto"/><ellipse cx="94.5" cy="153.5" rx="3.8" ry="3.7" fill="none" stroke="#000" stroke-width="1.05" shape-rendering="auto"/><ellipse cx="94.5" cy="158.0" rx="3.8" ry="3.7" fill="none" stroke="#000" stroke-width="1.05" shape-rendering="auto"/><ellipse cx="94.5" cy="162.5" rx="3.8" ry="3.7" fill="none" stroke="#000" stroke-width="1.05" shape-rendering="auto"/><ellipse cx="94.5" cy="167.0" rx="3.8" ry="3.7" fill="none" stroke="#000" stroke-width="1.05" shape-rendering="auto"/><ellipse cx="94.5" cy="171.5" rx="3.8" ry="3.7" fill="none" stroke="#000" stroke-width="1.05" shape-rendering="auto"/><ellipse cx="94.5" cy="176.0" rx="3.8" ry="3.7" fill="none" stroke="#000" stroke-width="1.05" shape-rendering="auto"/></svg>
<div class="t" style="left:103.5px;top:76px;font-size:10.4px;color:#000;letter-spacing:0px">BR1 1N4007</div><div class="t" style="left:67.5px;top:92.5px;font-size:10.4px;color:#000;letter-spacing:0px">T1 321V</div><div class="t" style="left:67.5px;top:104.5px;font-size:10.4px;color:#000;letter-spacing:0px">(52,5&Omega;)</div><div class="t" style="right:1212px;top:139.5px;font-size:10.2px;color:#000;letter-spacing:0px">C1 47uF</div><div class="t" style="right:1212px;top:151.5px;font-size:10.2px;color:#000;letter-spacing:0px">(2&Omega;)</div><div class="t" style="right:1040px;top:139.5px;font-size:10.2px;color:#000;letter-spacing:0px">C2 47uF</div><div class="t" style="right:1040px;top:151.5px;font-size:10.2px;color:#000;letter-spacing:0px">(2&Omega;)</div><div class="t" style="right:862px;top:139.5px;font-size:10.2px;color:#000;letter-spacing:0px">C3 47uF</div><div class="t" style="right:862px;top:151.5px;font-size:10.2px;color:#000;letter-spacing:0px">(2&Omega;)</div><div class="t" style="right:1129px;top:139.5px;font-size:10.2px;color:#000;letter-spacing:0px">I1 70mA</div><div class="t" style="right:1129px;top:151.5px;font-size:10.2px;color:#000;letter-spacing:0px">212mA</div><div class="t" style="right:951px;top:139.5px;font-size:10.2px;color:#000;letter-spacing:0px">I2 10mA</div><div class="t" style="right:951px;top:151.5px;font-size:10.2px;color:#000;letter-spacing:0px">20mA</div><div class="t" style="left:633px;top:139.5px;font-size:10.2px;color:#000;letter-spacing:0px">I3</div><div class="t" style="left:633px;top:151.5px;font-size:10.2px;color:#000;letter-spacing:0px">10mA</div><div class="t" style="left:362.5px;top:82px;font-size:10.2px;color:#000;letter-spacing:0px">R1 1k&Omega;</div><div class="t" style="left:537px;top:82px;font-size:10.2px;color:#000;letter-spacing:0px">R2 10k&Omega;</div><div class="t" style="left:91px;top:210px;font-size:9.6px;color:#000;letter-spacing:0.12px">Bridge (SS)</div><div class="t" style="left:194.5px;top:210px;font-size:9.6px;color:#000;letter-spacing:0.12px">C Filter</div><div class="t" style="left:272px;top:210px;font-size:9.6px;color:#000;letter-spacing:0.12px">Current Tap</div><div class="t" style="left:350px;top:210px;font-size:9.6px;color:#000;letter-spacing:0.12px">RC Filter Section</div><div class="t" style="left:450px;top:210px;font-size:9.6px;color:#000;letter-spacing:0.12px">Current Tap</div><div class="t" style="left:528px;top:210px;font-size:9.6px;color:#000;letter-spacing:0.12px">RC Filter Section</div><div class="t" style="left:634px;top:210px;font-size:9.6px;color:#000;letter-spacing:0.12px">Load</div>
<div class="a" style="left:66px;top:279px;width:331px;height:602px;background:#fff;border-top:1px solid #808080;border-left:1px solid #808080;border-right:1px solid #fff;border-bottom:1px solid #fff"></div><div class="a" style="left:67px;top:280px;width:329px;height:600px;border-top:1px solid #404040;border-left:1px solid #404040;border-right:1px solid #d4d0c8;border-bottom:1px solid #d4d0c8"></div><div class="a" style="left:68px;top:281px;width:46px;height:17px;background:#d4d0c8;border-top:1px solid #fff;border-left:1px solid #fff;border-right:1px solid #404040;border-bottom:1px solid #404040;box-shadow:inset -1px -1px 0 #808080"></div><div class="t" style="left:77px;top:285px;font-size:10.5px;color:#000">Result</div><div class="a" style="left:114px;top:281px;width:56px;height:17px;background:#d4d0c8;border-top:1px solid #fff;border-left:1px solid #fff;border-right:1px solid #404040;border-bottom:1px solid #404040;box-shadow:inset -1px -1px 0 #808080"></div><div class="t" style="right:1277px;top:285px;font-size:10.5px;color:#000">Min</div><div class="a" style="left:170px;top:281px;width:53px;height:17px;background:#d4d0c8;border-top:1px solid #fff;border-left:1px solid #fff;border-right:1px solid #404040;border-bottom:1px solid #404040;box-shadow:inset -1px -1px 0 #808080"></div><div class="t" style="right:1224px;top:285px;font-size:10.5px;color:#000">Max</div><div class="a" style="left:223px;top:281px;width:53px;height:17px;background:#d4d0c8;border-top:1px solid #fff;border-left:1px solid #fff;border-right:1px solid #404040;border-bottom:1px solid #404040;box-shadow:inset -1px -1px 0 #808080"></div><div class="t" style="right:1171px;top:285px;font-size:10.5px;color:#000">Diff</div><div class="a" style="left:276px;top:281px;width:54px;height:17px;background:#d4d0c8;border-top:1px solid #fff;border-left:1px solid #fff;border-right:1px solid #404040;border-bottom:1px solid #404040;box-shadow:inset -1px -1px 0 #808080"></div><div class="t" style="right:1117px;top:285px;font-size:10.5px;color:#000">Mean</div><div class="a" style="left:330px;top:281px;width:53px;height:17px;background:#d4d0c8;border-top:1px solid #fff;border-left:1px solid #fff;border-right:1px solid #404040;border-bottom:1px solid #404040;box-shadow:inset -1px -1px 0 #808080"></div><div class="t" style="right:1064px;top:285px;font-size:10.5px;color:#000">RMS</div><div class="a" style="left:383px;top:281px;width:12px;height:17px;background:#d4d0c8;border-top:1px solid #fff;border-left:1px solid #fff;border-bottom:1px solid #404040;box-shadow:inset 0 -1px 0 #808080"></div><div class="a" style="left:72px;top:300px;width:12px;height:12px;border:1.5px solid #000;background:#fff"></div><div class="t" style="left:91px;top:302px;font-size:10.6px;color:#000">I(B...</div><div class="t" style="right:1274.5px;top:302px;font-size:10.6px;color:#000">-210,69u</div><div class="t" style="right:1221.5px;top:302px;font-size:10.6px;color:#000">1,0922</div><div class="t" style="right:1168.5px;top:302px;font-size:10.6px;color:#000">1,0925</div><div class="t" style="right:1114.5px;top:302px;font-size:10.6px;color:#000">108,49m</div><div class="t" style="right:1061.5px;top:302px;font-size:10.6px;color:#000">302,27m</div><div class="a" style="left:72px;top:317px;width:12px;height:12px;border:1.5px solid #000;background:#fff"></div><div class="t" style="left:91px;top:319px;font-size:10.6px;color:#000">I(C1)</div><div class="t" style="right:1274.5px;top:319px;font-size:10.6px;color:#000">-258,75m</div><div class="t" style="right:1221.5px;top:319px;font-size:10.6px;color:#000">849,56m</div><div class="t" style="right:1168.5px;top:319px;font-size:10.6px;color:#000">1,1083</div><div class="t" style="right:1114.5px;top:319px;font-size:10.6px;color:#000">-179,37u</div><div class="t" style="right:1061.5px;top:319px;font-size:10.6px;color:#000">363,29m</div><div class="a" style="left:72px;top:334px;width:12px;height:12px;border:1.5px solid #000;background:#fff"></div><div class="t" style="left:91px;top:336px;font-size:10.6px;color:#000">I(C2)</div><div class="t" style="right:1274.5px;top:336px;font-size:10.6px;color:#000">-38,152m</div><div class="t" style="right:1221.5px;top:336px;font-size:10.6px;color:#000">17,896m</div><div class="t" style="right:1168.5px;top:336px;font-size:10.6px;color:#000">56,049m</div><div class="t" style="right:1114.5px;top:336px;font-size:10.6px;color:#000">-222,80u</div><div class="t" style="right:1061.5px;top:336px;font-size:10.6px;color:#000">10,383m</div><div class="a" style="left:72px;top:351px;width:12px;height:12px;border:1.5px solid #000;background:#fff"></div><div class="t" style="left:91px;top:353px;font-size:10.6px;color:#000">I(C3)</div><div class="t" style="right:1274.5px;top:353px;font-size:10.6px;color:#000">-2,8369m</div><div class="t" style="right:1221.5px;top:353px;font-size:10.6px;color:#000">741,94u</div><div class="t" style="right:1168.5px;top:353px;font-size:10.6px;color:#000">3,5788m</div><div class="t" style="right:1114.5px;top:353px;font-size:10.6px;color:#000">-196,56u</div><div class="t" style="right:1061.5px;top:353px;font-size:10.6px;color:#000">616,87u</div><div class="a" style="left:72px;top:368px;width:12px;height:12px;border:1.5px solid #000;background:#fff"></div><div class="t" style="left:91px;top:370px;font-size:10.6px;color:#000">I(I1)</div><div class="t" style="right:1274.5px;top:370px;font-size:10.6px;color:#000">69,871m</div><div class="t" style="right:1221.5px;top:370px;font-size:10.6px;color:#000">212,13m</div><div class="t" style="right:1168.5px;top:370px;font-size:10.6px;color:#000">142,26m</div><div class="t" style="right:1114.5px;top:370px;font-size:10.6px;color:#000">189,28m</div><div class="t" style="right:1061.5px;top:370px;font-size:10.6px;color:#000">196,30m</div><div class="a" style="left:72px;top:385px;width:12px;height:12px;border:1.5px solid #000;background:#fff"></div><div class="t" style="left:91px;top:387px;font-size:10.6px;color:#000">I(I2)</div><div class="t" style="right:1274.5px;top:387px;font-size:10.6px;color:#000">9,9997m</div><div class="t" style="right:1221.5px;top:387px;font-size:10.6px;color:#000">20,001m</div><div class="t" style="right:1168.5px;top:387px;font-size:10.6px;color:#000">10,001m</div><div class="t" style="right:1114.5px;top:387px;font-size:10.6px;color:#000">18,400m</div><div class="t" style="right:1061.5px;top:387px;font-size:10.6px;color:#000">18,761m</div><div class="a" style="left:72px;top:402px;width:12px;height:12px;border:1.5px solid #000;background:#fff"></div><div class="t" style="left:91px;top:404px;font-size:10.6px;color:#000">I(I3)</div><div class="t" style="right:1274.5px;top:404px;font-size:10.6px;color:#000">10m</div><div class="t" style="right:1221.5px;top:404px;font-size:10.6px;color:#000">10m</div><div class="t" style="right:1168.5px;top:404px;font-size:10.6px;color:#000">0</div><div class="t" style="right:1114.5px;top:404px;font-size:10.6px;color:#000">10,000m</div><div class="t" style="right:1061.5px;top:404px;font-size:10.6px;color:#000">9,9999m</div><div class="a" style="left:72px;top:419px;width:12px;height:12px;border:1.5px solid #000;background:#fff"></div><div class="t" style="left:91px;top:421px;font-size:10.6px;color:#000">I(R1)</div><div class="t" style="right:1274.5px;top:421px;font-size:10.6px;color:#000">-8,9909m</div><div class="t" style="right:1221.5px;top:421px;font-size:10.6px;color:#000">47,876m</div><div class="t" style="right:1168.5px;top:421px;font-size:10.6px;color:#000">56,867m</div><div class="t" style="right:1114.5px;top:421px;font-size:10.6px;color:#000">27,980m</div><div class="t" style="right:1061.5px;top:421px;font-size:10.6px;color:#000">30,051m</div><div class="a" style="left:72px;top:436px;width:12px;height:12px;border:1.5px solid #000;background:#fff"></div><div class="t" style="left:91px;top:438px;font-size:10.6px;color:#000">I(R2)</div><div class="t" style="right:1274.5px;top:438px;font-size:10.6px;color:#000">7,1630m</div><div class="t" style="right:1221.5px;top:438px;font-size:10.6px;color:#000">10,741m</div><div class="t" style="right:1168.5px;top:438px;font-size:10.6px;color:#000">3,5788m</div><div class="t" style="right:1114.5px;top:438px;font-size:10.6px;color:#000">9,8034m</div><div class="t" style="right:1061.5px;top:438px;font-size:10.6px;color:#000">9,8208m</div><div class="a" style="left:72px;top:453px;width:12px;height:12px;border:1.5px solid #000;background:#fff"></div><div class="t" style="left:91px;top:455px;font-size:10.6px;color:#000">I(T1)</div><div class="t" style="right:1274.5px;top:455px;font-size:10.6px;color:#000">-1,0922</div><div class="t" style="right:1221.5px;top:455px;font-size:10.6px;color:#000">1,0922</div><div class="t" style="right:1168.5px;top:455px;font-size:10.6px;color:#000">2,1845</div><div class="t" style="right:1114.5px;top:455px;font-size:10.6px;color:#000">-90,741u</div><div class="t" style="right:1061.5px;top:455px;font-size:10.6px;color:#000">427,61m</div><div class="a" style="left:72px;top:470px;width:12px;height:12px;border:1.5px solid #000;background:#fff"></div><div class="t" style="left:91px;top:472px;font-size:10.6px;color:#000">V(...</div><div class="t" style="right:1274.5px;top:472px;font-size:10.6px;color:#000">-429,26</div><div class="t" style="right:1221.5px;top:472px;font-size:10.6px;color:#000">944,06m</div><div class="t" style="right:1168.5px;top:472px;font-size:10.6px;color:#000">430,20</div><div class="t" style="right:1114.5px;top:472px;font-size:10.6px;color:#000">-257,69</div><div class="t" style="right:1061.5px;top:472px;font-size:10.6px;color:#000">306,23</div><div class="a" style="left:72px;top:487px;width:12px;height:12px;border:1.5px solid #000;background:#fff"></div><div class="t" style="left:91px;top:489px;font-size:10.6px;color:#000">V(...</div><div class="t" style="right:1274.5px;top:489px;font-size:10.6px;color:#000">373,71</div><div class="t" style="right:1221.5px;top:489px;font-size:10.6px;color:#000">429,43</div><div class="t" style="right:1168.5px;top:489px;font-size:10.6px;color:#000">55,723</div><div class="t" style="right:1114.5px;top:489px;font-size:10.6px;color:#000">396,44</div><div class="t" style="right:1061.5px;top:489px;font-size:10.6px;color:#000">396,73</div><div class="a" style="left:72px;top:504px;width:12px;height:12px;border:1.5px solid #000;background:#fff"></div><div class="t" style="left:91px;top:506px;font-size:10.6px;color:#000">V(...</div><div class="t" style="right:1274.5px;top:506px;font-size:10.6px;color:#000">360,81</div><div class="t" style="right:1221.5px;top:506px;font-size:10.6px;color:#000">401,98</div><div class="t" style="right:1168.5px;top:506px;font-size:10.6px;color:#000">41,177</div><div class="t" style="right:1114.5px;top:506px;font-size:10.6px;color:#000">368,40</div><div class="t" style="right:1061.5px;top:506px;font-size:10.6px;color:#000">368,70</div><div class="a" style="left:72px;top:521px;width:12px;height:12px;border:1.5px solid #000;background:#fff"></div><div class="t" style="left:91px;top:523px;font-size:10.6px;color:#000">V(...</div><div class="t" style="right:1274.5px;top:523px;font-size:10.6px;color:#000">261,39</div><div class="t" style="right:1221.5px;top:523px;font-size:10.6px;color:#000">301,63</div><div class="t" style="right:1168.5px;top:523px;font-size:10.6px;color:#000">40,240</div><div class="t" style="right:1114.5px;top:523px;font-size:10.6px;color:#000">270,35</div><div class="t" style="right:1061.5px;top:523px;font-size:10.6px;color:#000">270,75</div><div class="a" style="left:72px;top:538px;width:12px;height:12px;border:1.5px solid #000;background:#fff"></div><svg style="left:72px;top:538px" width="12" height="12"><path d="M2.8 5.6 L5 8 L9.3 3.4" fill="none" stroke="#000" stroke-width="2"/></svg><div class="t" style="left:91px;top:540px;font-size:10.6px;color:#000">V(I1)</div><div class="t" style="right:1274.5px;top:540px;font-size:10.6px;color:#000">373,65</div><div class="t" style="right:1221.5px;top:540px;font-size:10.6px;color:#000">429,39</div><div class="t" style="right:1168.5px;top:540px;font-size:10.6px;color:#000">55,742</div><div class="t" style="right:1114.5px;top:540px;font-size:10.6px;color:#000">396,38</div><div class="t" style="right:1061.5px;top:540px;font-size:10.6px;color:#000">396,67</div><div class="a" style="left:72px;top:555px;width:12px;height:12px;border:1.5px solid #000;background:#fff"></div><svg style="left:72px;top:555px" width="12" height="12"><path d="M2.8 5.6 L5 8 L9.3 3.4" fill="none" stroke="#000" stroke-width="2"/></svg><div class="t" style="left:91px;top:557px;font-size:10.6px;color:#000">V(I2)</div><div class="t" style="right:1274.5px;top:557px;font-size:10.6px;color:#000">360,79</div><div class="t" style="right:1221.5px;top:557px;font-size:10.6px;color:#000">401,96</div><div class="t" style="right:1168.5px;top:557px;font-size:10.6px;color:#000">41,177</div><div class="t" style="right:1114.5px;top:557px;font-size:10.6px;color:#000">368,38</div><div class="t" style="right:1061.5px;top:557px;font-size:10.6px;color:#000">368,68</div><div class="a" style="left:72px;top:572px;width:12px;height:12px;border:1.5px solid #000;background:#fff"></div><svg style="left:72px;top:572px" width="12" height="12"><path d="M2.8 5.6 L5 8 L9.3 3.4" fill="none" stroke="#000" stroke-width="2"/></svg><div class="t" style="left:91px;top:574px;font-size:10.6px;color:#000">V(I3)</div><div class="t" style="right:1274.5px;top:574px;font-size:10.6px;color:#000">261,39</div><div class="t" style="right:1221.5px;top:574px;font-size:10.6px;color:#000">301,63</div><div class="t" style="right:1168.5px;top:574px;font-size:10.6px;color:#000">40,240</div><div class="t" style="right:1114.5px;top:574px;font-size:10.6px;color:#000">270,35</div><div class="t" style="right:1061.5px;top:574px;font-size:10.6px;color:#000">270,75</div><div class="a" style="left:72px;top:589px;width:12px;height:12px;border:1.5px solid #000;background:#fff"></div><div class="t" style="left:91px;top:591px;font-size:10.6px;color:#000">V(...</div><div class="t" style="right:1274.5px;top:591px;font-size:10.6px;color:#000">-8,9909</div><div class="t" style="right:1221.5px;top:591px;font-size:10.6px;color:#000">47,876</div><div class="t" style="right:1168.5px;top:591px;font-size:10.6px;color:#000">56,867</div><div class="t" style="right:1114.5px;top:591px;font-size:10.6px;color:#000">27,980</div><div class="t" style="right:1061.5px;top:591px;font-size:10.6px;color:#000">30,051</div><div class="a" style="left:72px;top:606px;width:12px;height:12px;border:1.5px solid #000;background:#fff"></div><div class="t" style="left:91px;top:608px;font-size:10.6px;color:#000">V(...</div><div class="t" style="right:1274.5px;top:608px;font-size:10.6px;color:#000">71,630</div><div class="t" style="right:1221.5px;top:608px;font-size:10.6px;color:#000">107,41</div><div class="t" style="right:1168.5px;top:608px;font-size:10.6px;color:#000">35,788</div><div class="t" style="right:1114.5px;top:608px;font-size:10.6px;color:#000">98,034</div><div class="t" style="right:1061.5px;top:608px;font-size:10.6px;color:#000">98,208</div><div class="a" style="left:72px;top:623px;width:12px;height:12px;border:1.5px solid #000;background:#fff"></div><div class="t" style="left:91px;top:625px;font-size:10.6px;color:#000">V(...</div><div class="t" style="right:1274.5px;top:625px;font-size:10.6px;color:#000">-430,50</div><div class="t" style="right:1221.5px;top:625px;font-size:10.6px;color:#000">430,50</div><div class="t" style="right:1168.5px;top:625px;font-size:10.6px;color:#000">861,01</div><div class="t" style="right:1114.5px;top:625px;font-size:10.6px;color:#000">4,7621m</div><div class="t" style="right:1061.5px;top:625px;font-size:10.6px;color:#000">305,75</div><div class="a" style="left:86px;top:621px;width:297px;height:17px;border:1px dotted #000"></div>
<div class="a" style="left:396px;top:279px;width:1px;height:601px;background:#fff"></div><div class="a" style="left:397px;top:279px;width:3px;height:601px;background:#d4d0c8"></div><div class="a" style="left:400px;top:279px;width:1039px;height:601px;background:#c0c0c0"></div><div class="a" style="left:65px;top:880px;width:1375px;height:1px;background:#fff"></div><div class="a" style="left:65px;top:278px;width:1375px;height:2px;background:#808080"></div><div class="a" style="left:1439px;top:238px;width:1px;height:642px;background:#fff"></div><svg style="left:400px;top:279px" width="1039" height="601" viewBox="400 279 1039 601"><path d="M470 832.5H1336M470 816.5H1336M470 800.5H1336M470 783.5H1336M470 767.5H1336M470 751.5H1336M470 735.5H1336M470 718.5H1336M470 702.5H1336M470 686.5H1336M470 669.5H1336M470 653.5H1336M470 637.5H1336M470 621.5H1336M470 604.5H1336M470 588.5H1336M470 572.5H1336M470 555.5H1336M470 539.5H1336M470 523.5H1336M470 507.5H1336M470 490.5H1336M470 474.5H1336M470 458.5H1336M470 442.5H1336M470 425.5H1336M470 409.5H1336M470 393.5H1336M470 376.5H1336M470 360.5H1336M470 344.5H1336M470 328.5H1336M470 311.5H1336" stroke="#808080" stroke-width="1" stroke-dasharray="4 4" fill="none" shape-rendering="crispEdges"/><path d="M466 832.5H470M466 816.5H470M466 800.5H470M466 783.5H470M466 767.5H470M466 751.5H470M466 735.5H470M466 718.5H470M466 702.5H470M466 686.5H470M466 669.5H470M466 653.5H470M466 637.5H470M466 621.5H470M466 604.5H470M466 588.5H470M466 572.5H470M466 555.5H470M466 539.5H470M466 523.5H470M466 507.5H470M466 490.5H470M466 474.5H470M466 458.5H470M466 442.5H470M466 425.5H470M466 409.5H470M466 393.5H470M466 376.5H470M466 360.5H470M466 344.5H470M466 328.5H470M466 311.5H470" stroke="#808080" stroke-width="1" fill="none" shape-rendering="crispEdges"/><path d="M566.5 297V845M662.5 297V845M759.5 297V845M855.5 297V845M951.5 297V845M1047.5 297V845M1144.5 297V845M1240.5 297V845" stroke="#808080" stroke-width="1" stroke-dasharray="4 4" fill="none" shape-rendering="crispEdges"/><path d="M566.5 845V849M662.5 845V849M759.5 845V849M855.5 845V849M951.5 845V849M1047.5 845V849M1144.5 845V849M1240.5 845V849" stroke="#808080" stroke-width="1" fill="none" shape-rendering="crispEdges"/><path d="M494.5 845V847M518.5 845V847M542.5 845V847M590.5 845V847M614.5 845V847M638.5 845V847M686.5 845V847M710.5 845V847M735.5 845V847M783.5 845V847M807.5 845V847M831.5 845V847M879.5 845V847M903.5 845V847M927.5 845V847M975.5 845V847M999.5 845V847M1023.5 845V847M1072.5 845V847M1096.5 845V847M1120.5 845V847M1168.5 845V847M1192.5 845V847M1216.5 845V847M1264.5 845V847M1288.5 845V847M1312.5 845V847M468 840.5H469M468 836.5H469M468 828.5H469M468 824.5H469M468 820.5H469M468 812.5H469M468 808.5H469M468 804.5H469M468 796.5H469M468 792.5H469M468 787.5H469M468 779.5H469M468 775.5H469M468 771.5H469M468 763.5H469M468 759.5H469M468 755.5H469M468 747.5H469M468 743.5H469M468 739.5H469M468 730.5H469M468 726.5H469M468 722.5H469M468 714.5H469M468 710.5H469M468 706.5H469M468 698.5H469M468 694.5H469M468 690.5H469M468 682.5H469M468 678.5H469M468 674.5H469M468 665.5H469M468 661.5H469M468 657.5H469M468 649.5H469M468 645.5H469M468 641.5H469M468 633.5H469M468 629.5H469M468 625.5H469M468 617.5H469M468 612.5H469M468 608.5H469M468 600.5H469M468 596.5H469M468 592.5H469M468 584.5H469M468 580.5H469M468 576.5H469M468 568.5H469M468 564.5H469M468 560.5H469M468 551.5H469M468 547.5H469M468 543.5H469M468 535.5H469M468 531.5H469M468 527.5H469M468 519.5H469M468 515.5H469M468 511.5H469M468 503.5H469M468 498.5H469M468 494.5H469M468 486.5H469M468 482.5H469M468 478.5H469M468 470.5H469M468 466.5H469M468 462.5H469M468 454.5H469M468 450.5H469M468 446.5H469M468 437.5H469M468 433.5H469M468 429.5H469M468 421.5H469M468 417.5H469M468 413.5H469M468 405.5H469M468 401.5H469M468 397.5H469M468 389.5H469M468 385.5H469M468 380.5H469M468 372.5H469M468 368.5H469M468 364.5H469M468 356.5H469M468 352.5H469M468 348.5H469M468 340.5H469M468 336.5H469M468 332.5H469M468 323.5H469M468 319.5H469M468 315.5H469M468 307.5H469" stroke="#505050" stroke-width="1" fill="none" shape-rendering="crispEdges"/><rect x="471" y="298" width="192" height="49" fill="#ff0000"/><path d="M663 298 L664 298 L664 325 L665 345 L665 351 L666 354.5 L667 357 L668 358.6 L670 360.2 L673 361.5 L676 362 L690 362.5 L1336 362.8 L1336 478.8 L760 478.8 L700 477.8 L680 476.8 L672 475.5 L668 472.5 L666 470 L665 459 L664 436 L663 418 Z" fill="#ff0000"/><path d="M470 390.2 L520 389 L560 388.2 L662.5 387.4" fill="none" stroke="#008000" stroke-width="2.6"/><path d="M662.5 387.4 L663.4 392 L664.2 402 L665.4 423.3 L666.6 441 L668.3 458.9 L670.1 473 L671.9 485.6 L674.6 494.4 L679.9 503.3 L685 507 L690.6 509.6 L700 511.3 L715 512.8 L760 515.8 L800 517.2 L840 518.1 L900 518.5 L1336 518.6" fill="none" stroke="#008000" stroke-width="2.1" stroke-linejoin="round"/><path d="M685 507 L690.6 509.6 L700 511.3 L715 512.8 L760 515.8 L800 517.2 L840 518.1 L900 518.5 L1336 518.6" fill="none" stroke="#008000" stroke-width="4"/><path d="M471 739 L482.5 732.5 L495 728.5 L507.5 725 L520 722.3 L535 720 L550 718.3 L566 717 L600 714.8 L632.5 713.8 L664.5 713.5 L668 717 L677 735.4 L684 749 L691.7 762.5 L700 773.5 L708.3 783.3 L716 792.5 L725 801 L734 808 L743.75 814.6 L759.4 821.9 L772 827 L785.4 831.25 L800 834.5 L816.7 837.5 L835 839.6 L854.2 841.25 L875 842.2 L898 842.7" fill="none" stroke="#ffff00" stroke-width="1" shape-rendering="crispEdges"/><rect x="469" y="297" width="868" height="1" fill="#000"/><rect x="1336" y="297" width="1" height="548" fill="#000"/><rect x="469" y="297" width="2" height="548" fill="#000"/><rect x="469" y="843" width="868" height="2" fill="#000"/></svg><div class="t" style="right:976px;top:827px;font-size:11px;color:#000">265</div><div class="t" style="right:976px;top:811px;font-size:11px;color:#000">270</div><div class="t" style="right:976px;top:795px;font-size:11px;color:#000">275</div><div class="t" style="right:976px;top:778px;font-size:11px;color:#000">280</div><div class="t" style="right:976px;top:762px;font-size:11px;color:#000">285</div><div class="t" style="right:976px;top:746px;font-size:11px;color:#000">290</div><div class="t" style="right:976px;top:730px;font-size:11px;color:#000">295</div><div class="t" style="right:976px;top:713px;font-size:11px;color:#000">300</div><div class="t" style="right:976px;top:697px;font-size:11px;color:#000">305</div><div class="t" style="right:976px;top:681px;font-size:11px;color:#000">310</div><div class="t" style="right:976px;top:664px;font-size:11px;color:#000">315</div><div class="t" style="right:976px;top:648px;font-size:11px;color:#000">320</div><div class="t" style="right:976px;top:632px;font-size:11px;color:#000">325</div><div class="t" style="right:976px;top:616px;font-size:11px;color:#000">330</div><div class="t" style="right:976px;top:599px;font-size:11px;color:#000">335</div><div class="t" style="right:976px;top:583px;font-size:11px;color:#000">340</div><div class="t" style="right:976px;top:567px;font-size:11px;color:#000">345</div><div class="t" style="right:976px;top:550px;font-size:11px;color:#000">350</div><div class="t" style="right:976px;top:534px;font-size:11px;color:#000">355</div><div class="t" style="right:976px;top:518px;font-size:11px;color:#000">360</div><div class="t" style="right:976px;top:502px;font-size:11px;color:#000">365</div><div class="t" style="right:976px;top:485px;font-size:11px;color:#000">370</div><div class="t" style="right:976px;top:469px;font-size:11px;color:#000">375</div><div class="t" style="right:976px;top:453px;font-size:11px;color:#000">380</div><div class="t" style="right:976px;top:437px;font-size:11px;color:#000">385</div><div class="t" style="right:976px;top:420px;font-size:11px;color:#000">390</div><div class="t" style="right:976px;top:404px;font-size:11px;color:#000">395</div><div class="t" style="right:976px;top:388px;font-size:11px;color:#000">400</div><div class="t" style="right:976px;top:371px;font-size:11px;color:#000">405</div><div class="t" style="right:976px;top:355px;font-size:11px;color:#000">410</div><div class="t" style="right:976px;top:339px;font-size:11px;color:#000">415</div><div class="t" style="right:976px;top:323px;font-size:11px;color:#000">420</div><div class="t" style="right:976px;top:306px;font-size:11px;color:#000">425</div><div class="t" style="left:545px;width:41px;text-align:center;top:851px;font-size:11px;color:#000">3</div><div class="t" style="left:641px;width:41px;text-align:center;top:851px;font-size:11px;color:#000">4</div><div class="t" style="left:738px;width:41px;text-align:center;top:851px;font-size:11px;color:#000">5</div><div class="t" style="left:834px;width:41px;text-align:center;top:851px;font-size:11px;color:#000">6</div><div class="t" style="left:930px;width:41px;text-align:center;top:851px;font-size:11px;color:#000">7</div><div class="t" style="left:1026px;width:41px;text-align:center;top:851px;font-size:11px;color:#000">8</div><div class="t" style="left:1123px;width:41px;text-align:center;top:851px;font-size:11px;color:#000">9</div><div class="t" style="left:1219px;width:41px;text-align:center;top:851px;font-size:11px;color:#000">10</div><div class="t" style="left:431px;top:562px;font-size:11px;color:#000;transform:rotate(-90deg);transform-origin:6px 5px">V</div><div class="a" style="left:1361px;top:280px;width:26px;height:25px;background:#d4d0c8;border-top:1px solid #fff;border-left:1px solid #fff;border-right:1px solid #404040;border-bottom:1px solid #404040;box-shadow:inset -1px -1px 0 #808080"></div><svg style="left:1361px;top:280px" width="26" height="25" viewBox="0 0 26 25"><defs><pattern id="dith" width="2" height="2" patternUnits="userSpaceOnUse"><rect width="2" height="2" fill="#00ffff"/><rect width="1" height="1" fill="#fff"/><rect x="1" y="1" width="1" height="1" fill="#fff"/></pattern></defs><path d="M14.5 14.5 L20.5 20.5" stroke="#0000e0" stroke-width="2.3"/><polygon points="15.57,12.34 12.54,15.37 8.26,15.37 5.23,12.34 5.23,8.06 8.26,5.03 12.54,5.03 15.57,8.06" fill="url(#dith)" stroke="#000" stroke-width="1.2"/><path d="M6.8 17 h7.2 l-3.6 4 z" fill="#000"/></svg><div class="a" style="left:1387px;top:280px;width:26px;height:25px;background:#d4d0c8;border-top:1px solid #fff;border-left:1px solid #fff;border-right:1px solid #404040;border-bottom:1px solid #404040;box-shadow:inset -1px -1px 0 #808080"></div><svg style="left:1387px;top:280px" width="26" height="25" viewBox="0 0 26 25"><defs><pattern id="dith" width="2" height="2" patternUnits="userSpaceOnUse"><rect width="2" height="2" fill="#00ffff"/><rect width="1" height="1" fill="#fff"/><rect x="1" y="1" width="1" height="1" fill="#fff"/></pattern></defs><path d="M14.5 14.5 L20.5 20.5" stroke="#0000e0" stroke-width="2.3"/><polygon points="15.57,12.34 12.54,15.37 8.26,15.37 5.23,12.34 5.23,8.06 8.26,5.03 12.54,5.03 15.57,8.06" fill="url(#dith)" stroke="#000" stroke-width="1.2"/><path d="M6.8 21 h7.2 l-3.6 -4 z" fill="#000"/></svg><div class="a" style="left:1413px;top:280px;width:26px;height:25px;background:#d4d0c8;border-top:1px solid #fff;border-left:1px solid #fff;border-right:1px solid #404040;border-bottom:1px solid #404040;box-shadow:inset -1px -1px 0 #808080"></div><svg style="left:1413px;top:280px" width="26" height="25" viewBox="0 0 26 25"><defs><pattern id="dith" width="2" height="2" patternUnits="userSpaceOnUse"><rect width="2" height="2" fill="#00ffff"/><rect width="1" height="1" fill="#fff"/><rect x="1" y="1" width="1" height="1" fill="#fff"/></pattern></defs><path d="M14.5 14.5 L20.5 20.5" stroke="#0000e0" stroke-width="2.3"/><polygon points="15.57,12.34 12.54,15.37 8.26,15.37 5.23,12.34 5.23,8.06 8.26,5.03 12.54,5.03 15.57,8.06" fill="url(#dith)" stroke="#000" stroke-width="1.2"/><path d="M9.8 9.7 L16.8 16.5 M16.8 9.7 L9.8 16.5" stroke="#ff0000" stroke-width="2.2"/></svg><div class="a" style="left:1367px;top:341px;width:40px;height:40px;background:#000"></div><div class="a" style="left:1364px;top:338px;width:40px;height:40px;background:#fff;border:1px solid #000"></div><div class="a" style="left:1369px;top:346px;width:4px;height:1px;background:#ff0000"></div><div class="t" style="left:1376px;top:340.5px;font-size:11px;color:#000">V(I1)</div><div class="a" style="left:1369px;top:358px;width:4px;height:1px;background:#008000"></div><div class="t" style="left:1376px;top:352.3px;font-size:11px;color:#000">V(I2)</div><div class="a" style="left:1369px;top:370px;width:4px;height:1px;background:#ffff00"></div><div class="t" style="left:1376px;top:364.1px;font-size:11px;color:#000">V(I3)</div><svg style="left:195px;top:727px" width="14" height="22" viewBox="0 0 14 22"><path d="M1 1 L1 17 L5 13 L8 20 L10.5 19 L7.5 12.3 L13 12.3 Z" fill="#fff" stroke="#000" stroke-width="1.1" stroke-linejoin="round"/></svg>
</body></html>
